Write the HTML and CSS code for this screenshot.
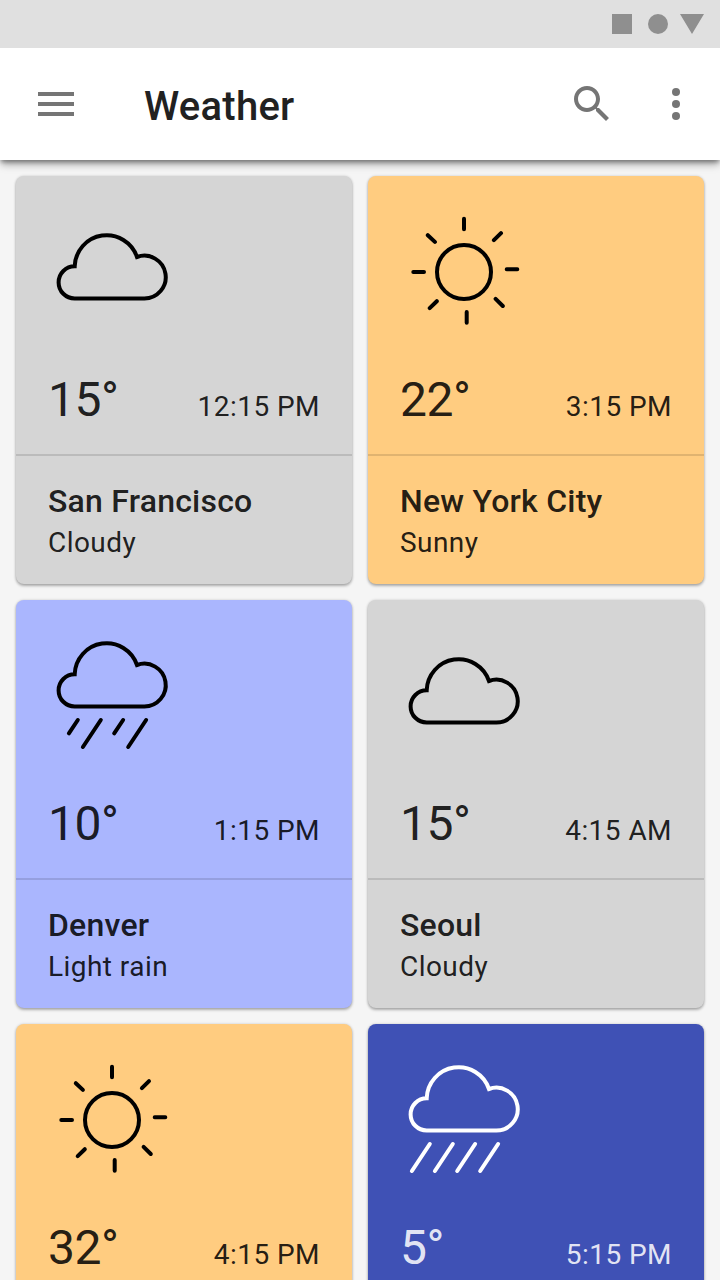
FILE: index.html
```html
<!DOCTYPE html>
<html lang="en">
<head>
<meta charset="utf-8">
<title>Weather</title>
<link rel="stylesheet" href="styles.css">
</head>
<body>
<svg class="defs" aria-hidden="true">
  <symbol id="cloud-shape" viewBox="0 0 128 128">
    <path d="M26.7 58.3A16.1 16.1 0 0 0 26.7 90.5H96A21.4 21.4 0 1 0 89 49A32 32 0 0 0 26.7 58.3Z"/>
  </symbol>
  <symbol id="cloudy" viewBox="0 0 128 128">
    <use href="#cloud-shape" width="128" height="128"/>
  </symbol>
  <symbol id="light-rain" viewBox="0 0 128 128">
    <use href="#cloud-shape" y="-16" width="128" height="128"/>
    <path d="M29.8 88L20.9 101.4M52.8 88L34.9 115M75.1 88L66.2 101.4M98.1 88L80.2 115"/>
  </symbol>
  <symbol id="rain" viewBox="0 0 128 128">
    <use href="#cloud-shape" y="-16" width="128" height="128"/>
    <path d="M29.8 88L11.9 115M52.8 88L34.9 115M75.1 88L57.2 115M98.1 88L80.2 115"/>
  </symbol>
  <symbol id="sunny" viewBox="0 0 128 128">
    <circle cx="64" cy="64" r="27"/>
    <path d="M64 10.7V21.3M101 25.2L93.9 32.2M106.7 61.3H117.3M95.6 90.8L102.8 98M66.7 104V114.7M36.8 93.2L29.7 100.1M13.3 64H24M34.9 33.9L27.8 27.2"/>
  </symbol>
</svg>

<header class="top">
  <div class="status-bar">
    <svg width="92" height="20" viewBox="0 0 92 20"><path d="M0 0H20V20H0ZM68 0H92L80 20Z"/><circle cx="46" cy="10" r="10"/></svg>
  </div>
  <div class="app-bar">
    <svg class="icon" viewBox="0 0 24 24"><path d="M3 18h18v-2H3v2zm0-5h18v-2H3v2zm0-7v2h18V6H3z"/></svg>
    <h1 class="title">Weather</h1>
    <svg class="icon" viewBox="0 0 24 24"><path d="M15.5 14h-.79l-.28-.27C15.41 12.59 16 11.11 16 9.5 16 5.91 13.09 3 9.5 3S3 5.91 3 9.5 5.91 16 9.5 16c1.61 0 3.09-.59 4.23-1.57l.27.28v.79l5 4.99L20.49 19l-4.99-5zm-6 0C7.01 14 5 11.99 5 9.5S7.01 5 9.5 5 14 7.01 14 9.5 11.99 14 9.5 14z"/></svg>
    <svg class="icon icon-more" viewBox="0 0 24 24"><circle cx="12" cy="6" r="2"/><circle cx="12" cy="12" r="2"/><circle cx="12" cy="18" r="2"/></svg>
  </div>
</header>

<main class="grid">
  <article class="card gray">
    <div class="now"><svg class="weather"><use href="#cloudy"/></svg>
      <div class="reading"><span class="temp">15°</span><span class="time">12:15 PM</span></div></div>
    <div class="place"><h2 class="city">San Francisco</h2><p class="condition">Cloudy</p></div>
  </article>
  <article class="card orange">
    <div class="now"><svg class="weather"><use href="#sunny"/></svg>
      <div class="reading"><span class="temp">22°</span><span class="time">3:15 PM</span></div></div>
    <div class="place"><h2 class="city">New York City</h2><p class="condition">Sunny</p></div>
  </article>
  <article class="card lavender">
    <div class="now"><svg class="weather"><use href="#light-rain"/></svg>
      <div class="reading"><span class="temp">10°</span><span class="time">1:15 PM</span></div></div>
    <div class="place"><h2 class="city">Denver</h2><p class="condition">Light rain</p></div>
  </article>
  <article class="card gray">
    <div class="now"><svg class="weather"><use href="#cloudy"/></svg>
      <div class="reading"><span class="temp">15°</span><span class="time">4:15 AM</span></div></div>
    <div class="place"><h2 class="city">Seoul</h2><p class="condition">Cloudy</p></div>
  </article>
  <article class="card orange">
    <div class="now"><svg class="weather"><use href="#sunny"/></svg>
      <div class="reading"><span class="temp">32°</span><span class="time">4:15 PM</span></div></div>
  </article>
  <article class="card indigo">
    <div class="now"><svg class="weather"><use href="#rain"/></svg>
      <div class="reading"><span class="temp">5°</span><span class="time">5:15 PM</span></div></div>
  </article>
</main>
</body>
</html>
```
FILE: styles.css
```css
* { box-sizing: border-box; margin: 0; }

body {
  display: flex;
  flex-direction: column;
  height: 1280px;
  overflow: hidden;
  background: #f5f5f5;
  color: rgba(0, 0, 0, 0.87);
  font-family: Roboto, "Liberation Sans", sans-serif;
}

.defs { display: none; }

.top {
  flex: none;
  background: #fff;
  box-shadow: 0 5px 8px -1px rgba(0, 0, 0, 0.36), 0 3px 4px -1px rgba(0, 0, 0, 0.3);
}

.status-bar {
  display: flex;
  align-items: center;
  justify-content: flex-end;
  height: 48px;
  padding-right: 16px;
  background: #e0e0e0;
  fill: #8f8f8f;
}

.app-bar {
  display: flex;
  align-items: center;
  height: 112px;
  padding: 0 20px 0 32px;
}

.icon { width: 48px; height: 48px; fill: #757575; }
.icon-more { margin-left: 36px; }

.title {
  flex: 1;
  padding: 6px 0 0 64px;
  font-size: 40px;
  font-weight: 500;
  line-height: 48px;
  letter-spacing: 0.25px;
  color: #212121;
}

.grid {
  display: grid;
  grid-template-columns: 1fr 1fr;
  grid-auto-rows: 408px;
  gap: 16px;
  flex: 1;
  min-height: 0;
  overflow: hidden;
  padding: 16px;
}

.top { position: relative; }

.card {
  border-radius: 8px;
  box-shadow: 0 2px 3px rgba(0, 0, 0, 0.28), 0 0 3px rgba(0, 0, 0, 0.16);
}

.gray { background: #d5d5d5; }
.orange { background: #ffcc80; }
.lavender { background: #aab6fe; }
.indigo { background: #3f51b5; color: rgba(255, 255, 255, 0.87); }

.now {
  display: flex;
  flex-direction: column;
  justify-content: space-between;
  height: 280px;
  padding: 32px 32px 26px;
  border-bottom: 2px solid rgba(0, 0, 0, 0.12);
}

.weather {
  width: 128px;
  height: 128px;
  fill: none;
  stroke: #000;
  stroke-width: 4;
  stroke-linecap: round;
}

.indigo .weather { stroke: #fff; }

.reading {
  display: flex;
  align-items: baseline;
  justify-content: space-between;
}

.temp {
  font-size: 48px;
  line-height: 56px;
  letter-spacing: -0.5px;
}

.time,
.condition { font-size: 28px; letter-spacing: 0.45px; }

.place { padding: 25px 32px; }

.city {
  font-size: 32px;
  font-weight: 500;
  line-height: 40px;
  letter-spacing: 0.22px;
}

.condition { line-height: 44px; }
```
